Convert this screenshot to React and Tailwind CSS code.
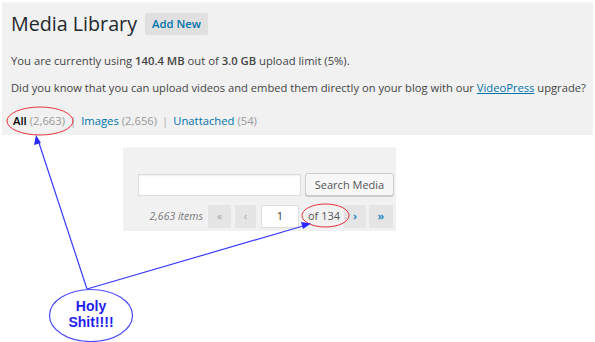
import React from "react";

export default function App() {
  const font = { fontFamily: '"Open Sans", "Liberation Sans", sans-serif' };
  return (
    <div className="relative w-[595px] h-[342px] bg-white overflow-hidden text-[#444]" style={font}>
      {/* top panel */}
      <div className="ml-[2px] mt-[2px] w-[591px] bg-[#f1f1f1] pl-[9px] pt-[5px] pb-[4px] border-t border-[#f6f6f6]">
        <div className="flex items-center">
          <h1 className="text-[19.7px] leading-[31px] text-[#23282d] font-normal">Media Library</h1>
          <span className="ml-[8px] w-[63px] h-[22px] bg-[#e0e0e0] rounded-[2px] text-[11.25px] leading-[22px] font-semibold text-[#0073aa] text-center">Add New</span>
        </div>
        <p className="mt-[12px] text-[11.25px] leading-[20px]">
          You are currently using <b className="font-semibold">140.4 MB</b> out of <b className="font-semibold">3.0 GB</b> upload limit (5%).
        </p>
        <p className="mt-[7px] text-[11.2px] leading-[20px] whitespace-nowrap">
          Did you know that you can upload videos and embed them directly on your blog with our{" "}
          <span className="text-[#0073aa] underline">VideoPress</span> upgrade?
        </p>
        <div className="mt-[13px] text-[11.25px] leading-[20px] flex items-center">
          <span className="ml-[2px] font-semibold text-[#000]">All</span>
          <span className="ml-[3px] text-[#999]">(2,663)</span>
          <span className="mx-[5px] text-[#aaa]">|</span>
          <span className="text-[#0073aa]">Images</span>
          <span className="ml-[3px] text-[#999]">(2,656)</span>
          <span className="mx-[5px] text-[#aaa]">|</span>
          <span className="text-[#0073aa]">Unattached</span>
          <span className="ml-[3px] text-[#999]">(54)</span>
        </div>
      </div>

      {/* second panel */}
      <div className="ml-[123px] mt-[12px] w-[273px] h-[84px] bg-[#f1f1f1] border-t border-[#f7f7f7] pt-[25px] pr-[2px] flex flex-col items-end">
        <div className="flex items-center">
          <div className="w-[163px] h-[22px] bg-white border border-[#ddd] shadow-[inset_0_1px_2px_rgba(0,0,0,0.07)]" />
          <div className="ml-[4px] w-[89px] h-[23px] bg-[#f7f7f7] border border-[#ccc] rounded-[3px] shadow-[0_1px_0_#ccc] text-[11px] leading-[21px] text-[#555] text-center">Search Media</div>
        </div>
        <div className="mt-[9px] mr-[1px] flex items-center h-[23px] text-[11px]">
          <span className="italic text-[#777] text-[10.5px] mr-[5px]">2,663 items</span>
          <span className="w-[23px] h-[23px] bg-[#e5e5e5] text-[#a0a5aa] flex items-center justify-center text-[11px]">«</span>
          <span className="ml-[4px] w-[21px] h-[23px] bg-[#e5e5e5] text-[#a0a5aa] flex items-center justify-center text-[11px]">‹</span>
          <span className="ml-[5px] w-[38px] h-[23px] bg-white border border-[#ddd] flex items-center justify-center text-[#333]">1</span>
          <span className="ml-[9px] mr-[4px] text-[#555]">of 134</span>
          <span className="w-[22px] h-[23px] bg-[#e5e5e5] text-[#2e8ec4] flex items-center justify-center font-bold text-[11px]">›</span>
          <span className="ml-[3px] w-[24px] h-[23px] bg-[#e5e5e5] text-[#2e8ec4] flex items-center justify-center font-bold text-[11px]">»</span>
        </div>
      </div>

      {/* annotations */}
      <svg className="absolute left-0 top-0 pointer-events-none" width="595" height="342" viewBox="0 0 595 342">
        <ellipse cx="40" cy="121" rx="33" ry="14" fill="none" stroke="#e8313a" strokeWidth="1" />
        <ellipse cx="325.5" cy="215.5" rx="23.5" ry="11.5" fill="none" stroke="#e8313a" strokeWidth="1" />
        <line x1="87" y1="289" x2="39" y2="143" stroke="#3a3aff" strokeWidth="1.2" />
        <polygon points="36,135 34,145 41,143" fill="#2a2aff" />
        <line x1="87" y1="289" x2="303" y2="226" stroke="#3a3aff" strokeWidth="1.2" />
        <polygon points="311,223.5 301,222 303,229" fill="#2a2aff" />
        <ellipse cx="91" cy="315.5" rx="41.5" ry="26" fill="white" stroke="#4a4aff" strokeWidth="1.2" />
      </svg>
      <div
        className="absolute left-[49px] top-[298px] w-[84px] text-center text-[14px] leading-[16px] font-bold text-[#1e1eee]"
        style={{ fontFamily: '"Liberation Sans", Arial, sans-serif' }}
      >
        Holy
        <br />
        Shit!!!!
      </div>
    </div>
  );
}
